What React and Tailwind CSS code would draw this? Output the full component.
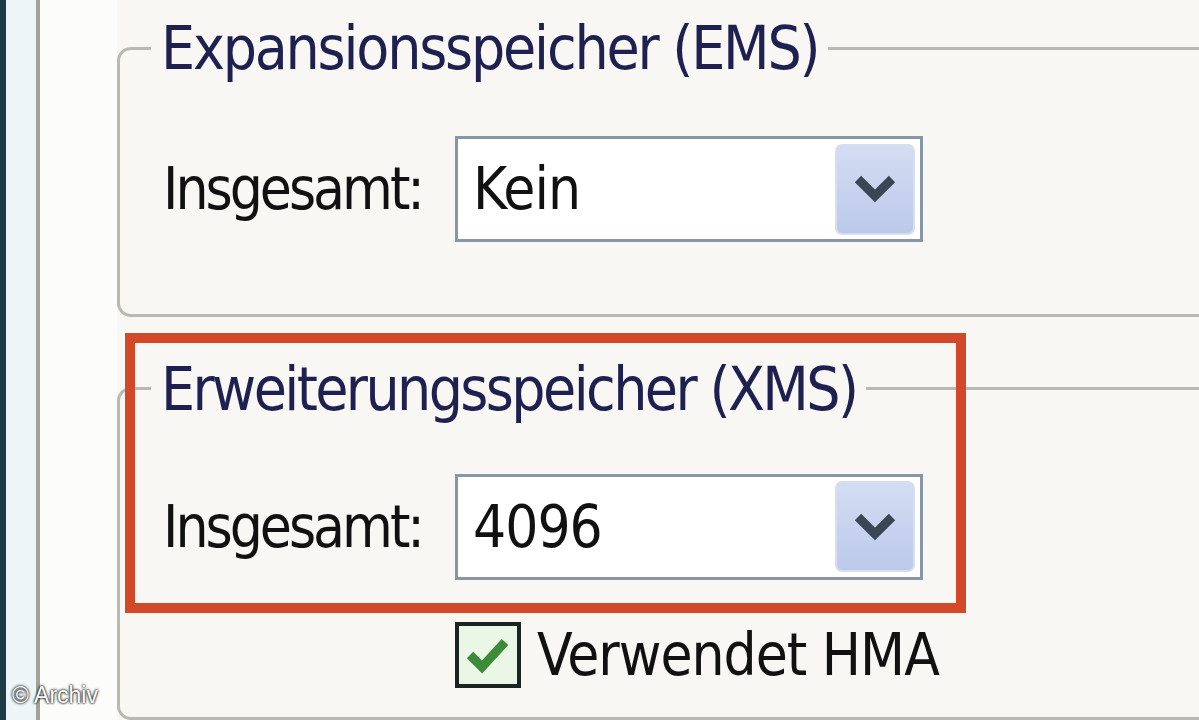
import React from "react";

const font = { fontFamily: '"DejaVu Sans Condensed", "DejaVu Sans", sans-serif' };

function Chevron() {
  return (
    <svg width="44" height="32" viewBox="0 0 44 32">
      <path d="M5 6 L22 23 L39 6" fill="none" stroke="#3a4656" strokeWidth="9" strokeLinejoin="miter" />
    </svg>
  );
}

function Combo({ value }) {
  return (
    <div className="w-[468px] h-[106px] border-[3px] border-[#8797a8] bg-white flex items-center justify-between pl-[15px] pr-[5px]">
      <span className="text-[58px] leading-none text-[#111] tracking-[-1px]">{value}</span>
      <div className="w-[80px] h-[91px] rounded-[7px] border-2 border-[#d6def0] bg-gradient-to-b from-[#d3ddf2] to-[#bccaea] flex items-center justify-center">
        <Chevron />
      </div>
    </div>
  );
}

export default function App() {
  return (
    <div className="w-[1199px] h-[720px] overflow-hidden relative flex bg-[#f9f7f3]" style={font}>
      <div className="w-[6px] shrink-0 bg-[#1d3c47]" />
      <div className="w-[30px] shrink-0 bg-[#eef5f6]" />
      <div className="w-[4px] shrink-0 bg-[#a3a39c]" />
      <div className="w-[77px] shrink-0 bg-[#fcfcfb]" />
      <div className="flex-1 flex flex-col pt-[18px]">
        <fieldset className="w-[1300px] h-[331px] border-[3px] border-[#b8b9b3] rounded-[14px] px-[43px]">
          <legend className="ml-[-12px] px-[10px] text-[60px] leading-[60px] text-[#1e2150] tracking-[-2.2px]">
            Expansionsspeicher (EMS)
          </legend>
          <div className="flex items-center mt-[58px]">
            <span className="w-[292px] text-[58px] leading-none text-[#111] tracking-[-3px]">Insgesamt:</span>
            <Combo value="Kein" />
          </div>
        </fieldset>
        <fieldset className="mt-[42px] w-[1300px] h-[400px] border-[3px] border-[#b8b9b3] rounded-[14px] px-[43px]">
          <legend className="ml-[-12px] px-[10px] text-[60px] leading-[60px] text-[#1e2150] tracking-[-2.6px]">
            Erweiterungsspeicher (XMS)
          </legend>
          <div className="flex items-center mt-[55px]">
            <span className="w-[292px] text-[58px] leading-none text-[#111] tracking-[-3px]">Insgesamt:</span>
            <Combo value="4096" />
          </div>
          <div className="flex items-center mt-[42px] ml-[292px] gap-[16px]">
            <div className="w-[66px] h-[66px] border-[4px] border-[#1c2420] bg-[#eaf6e6] flex items-center justify-center">
              <svg width="46" height="42" viewBox="0 0 46 42">
                <path d="M5 21 L17 33 L40 8" fill="none" stroke="#3d8a38" strokeWidth="9" />
              </svg>
            </div>
            <span className="text-[58px] leading-none text-[#111] tracking-[-1px]">Verwendet HMA</span>
          </div>
        </fieldset>
      </div>
      <div className="absolute left-[125px] top-[333px] w-[841px] h-[280px] border-[10px] border-[#d4482a] pointer-events-none" />
      <div className="absolute left-[12px] bottom-[8px] text-[23px] text-white [text-shadow:0_0_3px_#000,0_0_2px_#000]" style={{ fontFamily: '"Liberation Sans", Arial, sans-serif' }}>
        © Archiv
      </div>
    </div>
  );
}
